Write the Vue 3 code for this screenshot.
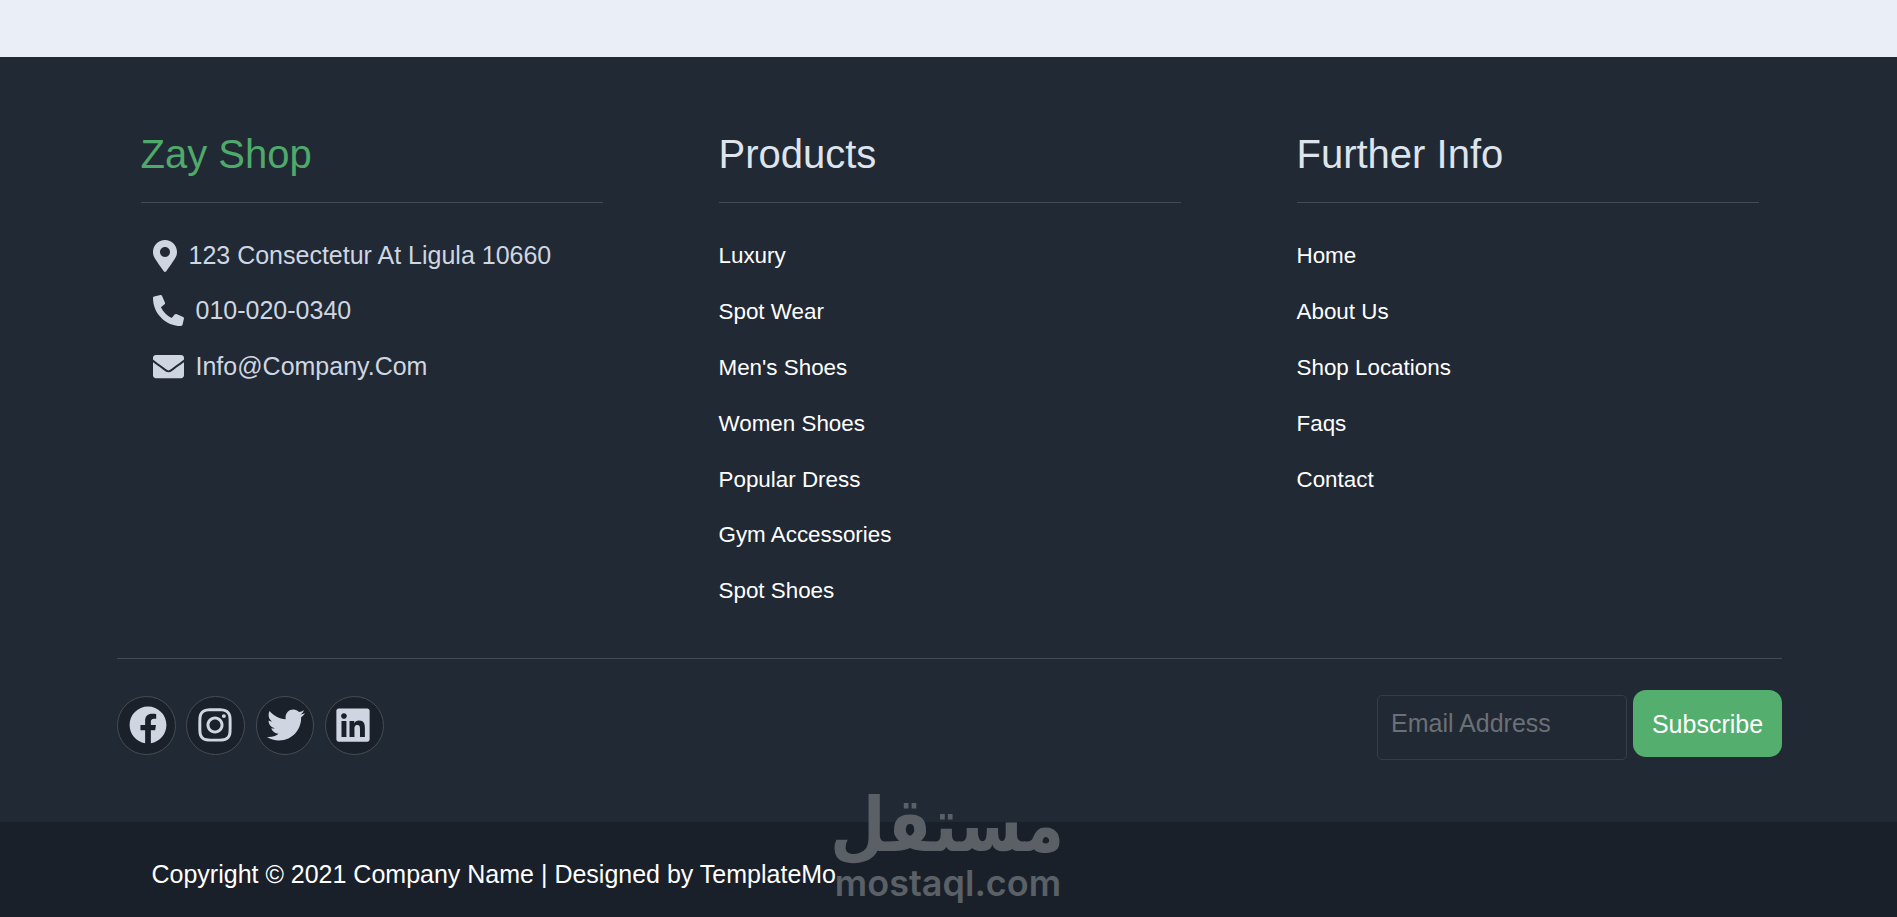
<script setup>
const products = ['Luxury', 'Spot Wear', "Men's Shoes", 'Women Shoes', 'Popular Dress', 'Gym Accessories', 'Spot Shoes']
const info = ['Home', 'About Us', 'Shop Locations', 'Faqs', 'Contact']
const social = [
  { name: 'facebook', vb: '0 0 512 512', w: 38, d: 'M504 256C504 119 393 8 256 8S8 119 8 256c0 123.78 90.69 226.38 209.25 245V327.69h-63V256h63v-54.64c0-62.15 37-96.48 93.67-96.48 27.14 0 55.52 4.84 55.52 4.84v61h-31.28c-30.8 0-40.41 19.12-40.41 38.73V256h68.78l-11 71.69h-57.78V501C413.31 482.38 504 379.78 504 256z' },
  { name: 'instagram', vb: '0 0 448 512', w: 34, d: 'M224.1 141c-63.6 0-114.9 51.3-114.9 114.9s51.3 114.9 114.9 114.9S339 319.5 339 255.9 287.7 141 224.1 141zm0 189.6c-41.1 0-74.7-33.5-74.7-74.7s33.5-74.7 74.7-74.7 74.7 33.5 74.7 74.7-33.6 74.7-74.7 74.7zm146.4-194.3c0 14.9-12 26.8-26.8 26.8-14.9 0-26.8-12-26.8-26.8s12-26.8 26.8-26.8 26.8 12 26.8 26.8zm76.1 27.2c-1.7-35.9-9.9-67.7-36.2-93.9-26.2-26.2-58-34.4-93.9-36.2-37-2.1-147.9-2.1-184.9 0-35.8 1.7-67.6 9.9-93.9 36.1s-34.4 58-36.2 93.9c-2.1 37-2.1 147.9 0 184.9 1.7 35.9 9.9 67.7 36.2 93.9s58 34.4 93.9 36.2c37 2.1 147.9 2.1 184.9 0 35.9-1.7 67.7-9.9 93.9-36.2 26.2-26.2 34.4-58 36.2-93.9 2.1-37 2.1-147.8 0-184.8zM398.8 388c-7.8 19.6-22.9 34.7-42.6 42.6-29.5 11.7-99.5 9-132.1 9s-102.7 2.6-132.1-9c-19.6-7.8-34.7-22.9-42.6-42.6-11.7-29.5-9-99.5-9-132.1s-2.6-102.7 9-132.1c7.8-19.6 22.9-34.7 42.6-42.6 29.5-11.7 99.5-9 132.1-9s102.7-2.6 132.1 9c19.6 7.8 34.7 22.9 42.6 42.6 11.7 29.5 9 99.5 9 132.1s2.7 102.7-9 132.1z' },
  { name: 'twitter', vb: '0 0 512 512', w: 38, d: 'M459.37 151.716c.325 4.548.325 9.097.325 13.645 0 138.72-105.583 298.558-298.558 298.558-59.452 0-114.68-17.219-161.137-47.106 8.447.974 16.568 1.299 25.34 1.299 49.055 0 94.213-16.568 130.274-44.832-46.132-.975-84.792-31.188-98.112-72.772 6.498.974 12.995 1.624 19.818 1.624 9.421 0 18.843-1.3 27.614-3.573-48.081-9.747-84.143-51.98-84.143-102.985v-1.299c13.969 7.797 30.214 12.67 47.431 13.319-28.264-18.843-46.781-51.005-46.781-87.391 0-19.492 5.197-37.36 14.294-52.954 51.655 63.675 129.3 105.258 216.365 109.807-1.624-7.797-2.599-15.918-2.599-24.04 0-57.828 46.782-104.934 104.934-104.934 30.213 0 57.502 12.67 76.67 33.137 23.715-4.548 46.456-13.32 66.599-25.34-7.798 24.366-24.366 44.833-46.132 57.827 21.117-2.273 41.584-8.122 60.426-16.243-14.292 20.791-32.161 39.308-52.628 54.253z' },
  { name: 'linkedin', vb: '0 0 448 512', w: 34, d: 'M416 32H31.9C14.3 32 0 46.5 0 64.3v383.4C0 465.5 14.3 480 31.9 480H416c17.6 0 32-14.5 32-32.3V64.3c0-17.8-14.4-32.3-32-32.3zM135.4 416H69V202.2h66.5V416zm-33.2-243c-21.3 0-38.5-17.3-38.5-38.5S80.9 96 102.2 96c21.2 0 38.5 17.3 38.5 38.5 0 21.3-17.2 38.5-38.5 38.5zm282.1 243h-66.4V312c0-24.8-.5-56.7-34.5-56.7-34.6 0-39.9 27-39.9 54.9V416h-66.4V202.2h63.7v29.2h.9c8.9-16.8 30.6-34.5 62.9-34.5 67.2 0 79.7 44.3 79.7 101.9V416z' }
]
</script>

<template>
  <div class="page">
    <div class="top-band"></div>
    <footer class="footer">
      <div class="container">
        <div class="columns">
          <section class="col">
            <h2 class="title brand">Zay Shop</h2>
            <ul class="contact">
              <li>
                <svg class="ic-marker" viewBox="0 0 384 512" aria-hidden="true"><path d="M172.268 501.67C26.97 291.031 0 268.413 0 192 0 85.961 85.961 0 192 0s192 85.961 192 192c0 76.413-26.97 99.031-172.268 309.67-9.535 13.774-29.93 13.773-39.464 0zM192 272c44.183 0 80-35.817 80-80s-35.817-80-80-80-80 35.817-80 80 35.817 80 80 80z"/></svg>
                <span>123 Consectetur At Ligula 10660</span>
              </li>
              <li>
                <svg class="ic-wide flip" viewBox="0 0 512 512" aria-hidden="true"><path d="M493.4 24.6l-104-24c-11.3-2.6-22.9 3.3-27.5 13.9l-48 112c-4.2 9.8-1.4 21.3 6.9 28l60.6 49.6c-36 76.7-98.9 140.5-177.2 177.2l-49.6-60.6c-6.8-8.3-18.2-11.1-28-6.9l-112 48C3.9 366.5-2 378.1.6 389.4l24 104C27.1 504.2 36.7 512 48 512c256.1 0 464-207.5 464-464 0-11.2-7.7-20.9-18.6-23.4z"/></svg>
                <span>010-020-0340</span>
              </li>
              <li>
                <svg class="ic-wide" viewBox="0 0 512 512" aria-hidden="true"><path d="M502.3 190.8c3.9-3.1 9.7-.2 9.7 4.7V400c0 26.5-21.5 48-48 48H48c-26.5 0-48-21.5-48-48V195.6c0-5 5.7-7.8 9.7-4.7 22.4 17.4 52.1 39.5 154.1 113.6 21.1 15.4 56.7 47.8 92.2 47.6 35.7.3 72-32.8 92.3-47.6 102-74.1 131.6-96.3 154-113.7zM256 320c23.2.4 56.6-29.2 73.4-41.4 132.7-96.3 142.8-104.7 173.4-128.7 5.8-4.5 9.2-11.5 9.2-18.9v-19c0-26.5-21.5-48-48-48H48C21.5 64 0 85.5 0 112v19c0 7.4 3.4 14.3 9.2 18.9 30.6 23.9 40.7 32.4 173.4 128.7 16.8 12.2 50.2 41.8 73.4 41.4z"/></svg>
                <span>Info@Company.Com</span>
              </li>
            </ul>
          </section>
          <section class="col">
            <h2 class="title">Products</h2>
            <ul class="links">
              <li v-for="p in products" :key="p"><a>{{ p }}</a></li>
            </ul>
          </section>
          <section class="col">
            <h2 class="title">Further Info</h2>
            <ul class="links">
              <li v-for="p in info" :key="p"><a>{{ p }}</a></li>
            </ul>
          </section>
        </div>
        <div class="bar">
          <div class="social">
            <a v-for="s in social" :key="s.name" class="circle" :class="s.name" :aria-label="s.name">
              <svg :viewBox="s.vb" :width="s.w" :height="38" aria-hidden="true"><path :d="s.d"/></svg>
            </a>
          </div>
          <form class="subscribe" @submit.prevent>
            <input class="email" type="text" placeholder="Email Address" />
            <button class="btn" type="submit">Subscribe</button>
          </form>
        </div>
      </div>
    </footer>
    <div class="copy">
      <p>Copyright © 2021 Company Name | Designed by TemplateMo</p>
    </div>
    <div class="watermark" aria-label="mostaql.com">
      <div class="wm-ar" dir="rtl">مستقل</div>
      <div class="wm-en">mostaql.com</div>
    </div>
  </div>
</template>

<style scoped>
.page {
  position: relative;
  height: 917px;
  overflow: hidden;
  font-family: "Liberation Sans", Arial, sans-serif;
  background: #212934;
}
.top-band { height: 57px; background: #e9eef7; }
.footer { height: 765px; background: #212934; }
.container {
  width: 1665px;
  margin-left: 117px;
  padding-top: 74px;
}
.columns {
  display: grid;
  grid-template-columns: repeat(3, 462px);
  column-gap: 116px;
  padding-left: 23.5px;
  height: 527px;
}
.title {
  margin: 0;
  height: 71px;
  font-size: 40px;
  line-height: 46px;
  font-weight: 400;
  color: #dee4ec;
  border-bottom: 1px solid #454b54;
}
.brand { color: #4fa96a; }
ul { list-style: none; margin: 0; padding: 0; }
.contact { padding: 25px 0 0 12px; font-size: 25px; color: #cfd6e1; }
.contact li { display: flex; align-items: center; height: 55.3px; }
.contact span { margin-left: 12px; }
.ic-marker { width: 24px; height: 32px; fill: #cfd6e1; flex: none; }
.ic-wide { width: 31px; height: 31px; fill: #cfd6e1; flex: none; }
.flip { transform: scaleX(-1); }
.links { padding-top: 25px; }
.links li { height: 55.9px; display: flex; align-items: center; }
.links a { font-size: 22.4px; color: #fff; }
.bar {
  border-top: 1px solid #454b54;
  display: flex;
  justify-content: space-between;
  align-items: flex-start;
  padding-top: 31px;
}
.social { display: flex; gap: 10.8px; padding-top: 6px; }
.circle {
  width: 58.6px;
  height: 58.6px;
  box-sizing: border-box;
  border: 1px solid #474c54;
  border-radius: 50%;
  background: #1b212b;
  display: flex;
  align-items: center;
  justify-content: center;
}
.circle svg { fill: #cfd6e1; }
.facebook svg { margin-left: 3px; }
.instagram svg { margin-right: 2px; }
.twitter svg { margin-left: 1px; }
.linkedin svg { margin-right: 3px; }
.subscribe { display: flex; align-items: flex-start; gap: 6px; }
.email {
  width: 250px;
  height: 65px;
  box-sizing: border-box;
  padding: 0 14px 8px 13px;
  margin-top: 5px;
  background: transparent;
  border: 1px solid #383e48;
  border-radius: 5px;
  font: 25px "Liberation Sans", Arial, sans-serif;
  color: #fff;
  outline: none;
}
.email::placeholder { color: #6c7075; opacity: 1; }
.btn {
  width: 149px;
  height: 67px;
  border: 0;
  border-radius: 13px;
  background: #54ae6d;
  color: #fff;
  font: 25px "Liberation Sans", Arial, sans-serif;
  padding: 1px 0 0;
}
.copy {
  height: 95px;
  background: #19202a;
  display: flex;
  align-items: center;
  padding-left: 151.5px;
}
.copy p { margin: 10px 0 0; font-size: 25px; color: #fff; }
.watermark {
  position: absolute;
  left: 832px;
  top: 786px;
  width: 232px;
  color: #5b6067;
  text-align: center;
  pointer-events: none;
}
.wm-ar {
  font-family: "DejaVu Sans", sans-serif;
  font-weight: 700;
  font-size: 64px;
  line-height: 78px;
  white-space: nowrap;
  transform: scaleY(1.18);
}
.wm-en {
  font-family: Inter, "Liberation Sans", sans-serif;
  font-weight: 600;
  font-size: 36px;
  line-height: 38px;
  white-space: nowrap;
}
</style>
<style>
html, body { margin: 0; padding: 0; }
</style>
